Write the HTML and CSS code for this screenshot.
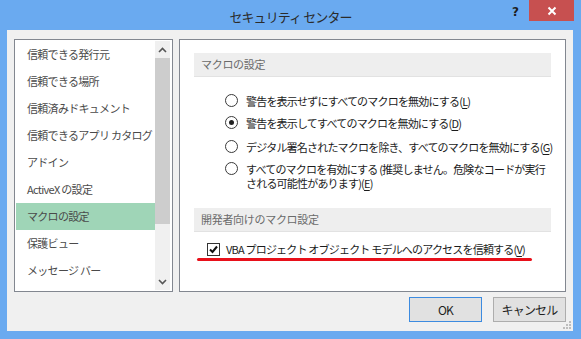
FILE: index.html
```html
<!DOCTYPE html>
<html>
<head>
  <meta charset="UTF-8">
  <title>セキュリティ センター</title>
  <link rel="stylesheet" href="styles.css">
</head>
<body>
  <div class="window">
    <div class="titlebar">
      <span></span>
      <span class="title">セキュリティ センター</span>
      <div class="title-buttons">
        <span class="help">?</span>
        <span class="close">
          <svg width="10" height="10" viewBox="0 0 10 10">
            <path d="M1.5 1.5 L8.5 8.5 M8.5 1.5 L1.5 8.5" stroke="#fff" stroke-width="2"/>
          </svg>
        </span>
      </div>
    </div>

    <div class="client">
      <div class="panes">
        <div class="nav">
          <ul class="nav-list">
            <li>信頼できる発行元</li>
            <li>信頼できる場所</li>
            <li>信頼済みドキュメント</li>
            <li>信頼できるアプリ カタログ</li>
            <li>アドイン</li>
            <li>ActiveX の設定</li>
            <li class="selected">マクロの設定</li>
            <li>保護ビュー</li>
            <li>メッセージ バー</li>
          </ul>
          <div class="scrollbar">
            <span class="sb-arrow">
              <svg width="9" height="6" viewBox="0 0 9 6"><path d="M1 5 L4.5 1.5 L8 5" fill="none" stroke="#555" stroke-width="1.6"/></svg>
            </span>
            <div class="sb-track"><div class="sb-thumb"></div></div>
            <span class="sb-arrow">
              <svg width="9" height="6" viewBox="0 0 9 6"><path d="M1 1 L4.5 4.5 L8 1" fill="none" stroke="#555" stroke-width="1.6"/></svg>
            </span>
          </div>
        </div>

        <div class="content">
          <div class="section-head">マクロの設定</div>
          <div class="options">
            <div class="opt">
              <span class="radio"></span>
              <span class="opt-text">警告を表示せずにすべてのマクロを無効にする(<u>L</u>)</span>
            </div>
            <div class="opt">
              <span class="radio checked"></span>
              <span class="opt-text">警告を表示してすべてのマクロを無効にする(<u>D</u>)</span>
            </div>
            <div class="opt spaced">
              <span class="radio"></span>
              <span class="opt-text">デジタル署名されたマクロを除き、すべてのマクロを無効にする(<u>G</u>)</span>
            </div>
            <div class="opt">
              <span class="radio"></span>
              <span class="opt-text">すべてのマクロを有効にする (推奨しません。危険なコードが実行<br>される可能性があります)(<u>E</u>)</span>
            </div>
          </div>

          <div class="section-head second">開発者向けのマクロ設定</div>
          <div class="check-row">
            <span class="checkbox">
              <svg width="11" height="11" viewBox="0 0 11 11"><path d="M2 5.5 L4.5 8 L9 2.5" fill="none" stroke="#111" stroke-width="2"/></svg>
            </span>
            <span class="opt-text">VBA プロジェクト オブジェクト モデルへのアクセスを信頼する(<u>V</u>)</span>
          </div>
          <div class="red-mark"></div>
        </div>
      </div>

      <div class="actions">
        <button class="btn default">OK</button>
        <button class="btn">キャンセル</button>
      </div>
      <span class="grip">
        <svg width="9" height="9" viewBox="0 0 9 9" fill="#bdbdbd">
          <rect x="6" y="0" width="2" height="2"/>
          <rect x="3" y="3" width="2" height="2"/><rect x="6" y="3" width="2" height="2"/>
          <rect x="0" y="6" width="2" height="2"/><rect x="3" y="6" width="2" height="2"/><rect x="6" y="6" width="2" height="2"/>
        </svg>
      </span>
    </div>
  </div>
</body>
</html>
```

FILE: styles.css
```css
body {
  margin: 0;
  padding: 0;
  font-family: "Noto Sans CJK JP", "Noto Sans", sans-serif;
  background: #6aaaf0;
}
.window {
  width: 581px;
  height: 339px;
  background: #6aaaf0;
  box-sizing: border-box;
}
.titlebar {
  height: 30px;
  display: grid;
  grid-template-columns: 81px 1fr 81px;
}
.title {
  text-align: center;
  font-size: 13px;
  letter-spacing: -0.9px;
  color: #2b2b2b;
  padding-top: 9px;
  line-height: 16px;
}
.title-buttons {
  display: flex;
  align-items: flex-start;
  justify-content: flex-end;
  padding-right: 7px;
}
.help {
  font-family: "DejaVu Sans", sans-serif;
  font-weight: bold;
  font-size: 12px;
  color: #1e1e1e;
  line-height: 12px;
  margin: 6px 10px 0 0;
}
.close {
  width: 45px;
  height: 21px;
  background: #c75050;
  display: flex;
  align-items: center;
  justify-content: center;
}

/* client area */
.client {
  position: relative;
  margin: 0 8px 0 7px;
  height: 301px;
  background: #f0f0f0;
  padding: 9px 7px 0 7px;
  box-sizing: border-box;
}
.panes {
  display: flex;
  gap: 6px;
  height: 253px;
}
.nav {
  flex: none;
  width: 159px;
  border: 1px solid #828790;
  background: #fff;
  box-sizing: border-box;
  display: flex;
  padding: 1px;
}
.nav-list {
  list-style: none;
  margin: 0;
  padding: 0;
  flex: 1;
  min-width: 0;
  overflow: hidden;
}
.nav-list li {
  height: 27px;
  line-height: 27px;
  padding-left: 11px;
  font-size: 11px;
  letter-spacing: -0.7px;
  color: #4a4a4a;
  white-space: nowrap;
}
.nav-list li.selected {
  background: #9fd5b7;
}
.scrollbar {
  flex: none;
  width: 15px;
  background: #f0f0f0;
  display: flex;
  flex-direction: column;
  margin-right: 1px;
}
.sb-arrow {
  height: 17px;
  display: flex;
  align-items: center;
  justify-content: center;
}
.sb-track {
  flex: 1;
}
.sb-thumb {
  height: 166px;
  background: #cdcdcd;
}

.content {
  flex: 1;
  min-width: 0;
  border: 1px solid #828790;
  background: #fff;
  padding: 13px 14px 0 14px;
  box-sizing: border-box;
}
.section-head {
  height: 23px;
  line-height: 23px;
  background: #eeeeee;
  border-bottom: 1px solid #e2e2e2;
  padding-left: 7px;
  font-size: 11px;
  letter-spacing: -0.3px;
  color: #6a6a6a;
}
.section-head.second {
  margin-top: 18px;
}
.options {
  padding-left: 31px;
  margin-top: 17px;
  display: flex;
  flex-direction: column;
  gap: 8px;
}
.opt {
  display: flex;
  align-items: flex-start;
  gap: 8px;
}
.opt.spaced {
  margin-top: 2px;
}
.opt-text {
  font-size: 11px;
  line-height: 14px;
  letter-spacing: -0.8px;
  color: #1b1b1b;
  white-space: nowrap;
}
.opt-text u {
  text-underline-offset: 2px;
}
.radio {
  flex: none;
  width: 13px;
  height: 13px;
  border: 1px solid #3a3a3a;
  border-radius: 50%;
  box-sizing: border-box;
  background: #fff;
  display: flex;
  align-items: center;
  justify-content: center;
}
.radio.checked::after {
  content: "";
  width: 5px;
  height: 5px;
  border-radius: 50%;
  background: #222;
}
.check-row {
  display: flex;
  align-items: center;
  gap: 6px;
  margin-top: 10px;
  padding-left: 13px;
}
.checkbox {
  flex: none;
  width: 13px;
  height: 13px;
  border: 1px solid #333;
  box-sizing: border-box;
  display: flex;
  align-items: center;
  justify-content: center;
}
.red-mark {
  margin: 2px 0 0 3px;
  width: 335px;
  height: 3px;
  border-radius: 2px;
  background: #e8101a;
}

.actions {
  display: flex;
  justify-content: flex-end;
  gap: 11px;
  margin-top: 5px;
}
.btn {
  width: 73px;
  height: 25px;
  border: 1px solid #adadad;
  background: #e1e1e1;
  font-family: "Noto Sans CJK JP", "Noto Sans", sans-serif;
  font-size: 12px;
  letter-spacing: -0.8px;
  color: #1e1e1e;
  padding: 0;
  box-sizing: border-box;
}
.btn.default {
  border-color: #3c8be0;
}
.grip {
  position: absolute;
  right: 1px;
  bottom: 1px;
  display: flex;
}
```
